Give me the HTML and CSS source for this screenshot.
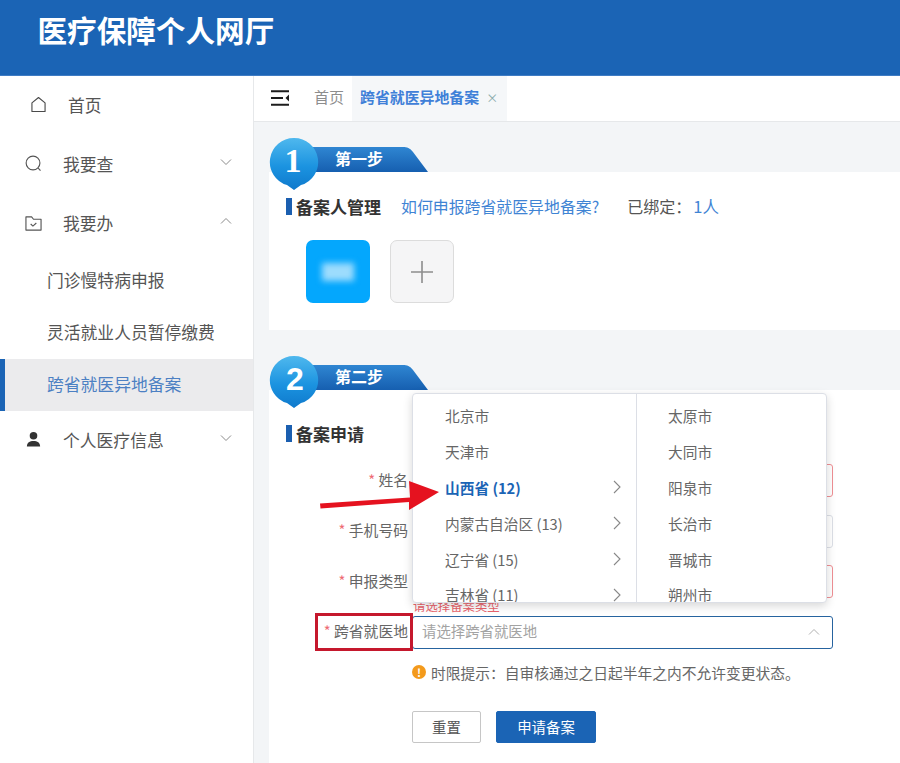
FILE: index.html
```html
<!DOCTYPE html>
<html lang="zh-CN">
<head>
<meta charset="utf-8">
<title>医疗保障个人网厅</title>
<link rel="stylesheet" href="styles.css">
</head>
<body>
<svg class="defs" width="0" height="0" aria-hidden="true">
  <defs>
    <symbol id="down" viewBox="0 0 12 8"><path d="M1 1.500l5 5 5-5" fill="none" stroke="currentColor" stroke-width="1"/></symbol>
    <symbol id="up" viewBox="0 0 12 8"><path d="M1 6.500l5-5 5 5" fill="none" stroke="currentColor" stroke-width="1"/></symbol>
    <symbol id="right" viewBox="0 0 8 14"><path d="M1 1l6 6-6 6" fill="none" stroke="currentColor" stroke-width="1.100"/></symbol>
    <linearGradient id="ball" x1="0" y1="0" x2="0" y2="1"><stop offset="0" stop-color="#4fb8ee"/><stop offset=".55" stop-color="#1b93e0"/><stop offset="1" stop-color="#0f79cc"/></linearGradient>
    <linearGradient id="band" x1="0" y1="0" x2="0" y2="1"><stop offset="0" stop-color="#2f86d2"/><stop offset="1" stop-color="#165fb0"/></linearGradient>
  </defs>
</svg>
<header class="topbar"><h1 class="brand">医疗保障个人网厅</h1></header>
<div class="shell">
  <nav class="sidebar">
    <a class="nav-item nav-home">
      <svg class="nav-icon home-icon" viewBox="0 0 16 17"><path d="M1 6.800L8 1l7 5.800V16H1z" fill="none" stroke="#4a4a4a" stroke-width="1.200" stroke-linejoin="round"/></svg>
      <span>首页</span>
    </a>
    <a class="nav-item">
      <svg class="nav-icon" viewBox="0 0 18 18"><circle cx="8.500" cy="8.500" r="7.300" fill="none" stroke="#555" stroke-width="1.200"/><path d="M14 14l2.400 2.600" stroke="#555" stroke-width="1.200"/></svg>
      <span class="nav-label">我要查</span>
      <svg class="chev"><use href="#down"/></svg>
    </a>
    <a class="nav-item">
      <svg class="nav-icon" viewBox="0 0 18 16"><path d="M1 1h6l2 2.500h8V15H1z" fill="none" stroke="#555" stroke-width="1.200" stroke-linejoin="round"/><path d="M6 8.500l2.400 2.200L12 7.500" fill="none" stroke="#555" stroke-width="1.200"/></svg>
      <span class="nav-label">我要办</span>
      <svg class="chev"><use href="#up"/></svg>
    </a>
    <div class="subnav">
      <a class="sub-item">门诊慢特病申报</a>
      <a class="sub-item">灵活就业人员暂停缴费</a>
      <a class="sub-item sub-active">跨省就医异地备案</a>
    </div>
    <a class="nav-item">
      <svg class="nav-icon" viewBox="0 0 18 18"><circle cx="9" cy="5" r="4" fill="#333"/><path d="M2 16.500c0-4.500 3-6 7-6s7 1.500 7 6z" fill="#333"/></svg>
      <span class="nav-label">个人医疗信息</span>
      <svg class="chev"><use href="#down"/></svg>
    </a>
  </nav>
  <main class="main">
    <div class="tabs">
      <svg class="tabs-toggle" viewBox="0 0 18 16"><path d="M0 1.200h18M0 8h12M0 14.800h18" stroke="#1d1d1d" stroke-width="2"/><path d="M18 4.500L14.500 8l3.500 3.500z" fill="#1d1d1d"/></svg>
      <span class="tab">首页</span>
      <span class="tab tab-active">跨省就医异地备案<i class="tab-close">×</i></span>
    </div>
    <div class="content">
      <section class="step step-one">
        <div class="ribbon">
          <svg class="ribbon-art" viewBox="0 0 160 54" width="160" height="54">
            <path d="M24 11h110c4 0 7 1 10 5l15 20H24z" fill="url(#band)"/>
            <path d="M25 2a24 24 0 0 1 7 47l-7 5-7-5A24 24 0 0 1 25 2z" fill="url(#ball)"/>
            <text class="ribbon-num" x="24" y="36" text-anchor="middle">1</text>
            <text class="ribbon-text" x="66" y="29">第一步</text>
          </svg>
        </div>
        <div class="card card-one">
          <div class="card-head">
            <h2 class="card-title">备案人管理</h2>
            <a class="help-link">如何申报跨省就医异地备案?</a>
            <span class="bound">已绑定：<em>1人</em></span>
          </div>
          <div class="people">
            <div class="person"><span class="blur-name"></span></div>
            <div class="add-person"><svg viewBox="0 0 22 22" width="22" height="22"><path d="M11 0v22M0 11h22" stroke="#8d8d8d" stroke-width="1.600"/></svg></div>
          </div>
        </div>
      </section>
      <section class="step step-two">
        <div class="ribbon">
          <svg class="ribbon-art" viewBox="0 0 160 54" width="160" height="54">
            <path d="M24 11h110c4 0 7 1 10 5l15 20H24z" fill="url(#band)"/>
            <path d="M25 2a24 24 0 0 1 7 47l-7 5-7-5A24 24 0 0 1 25 2z" fill="url(#ball)"/>
            <text class="ribbon-num ribbon-num2" x="26" y="36" text-anchor="middle">2</text>
            <text class="ribbon-text" x="66" y="29">第二步</text>
          </svg>
        </div>
        <div class="card card-two">
          <h2 class="card-title">备案申请</h2>
          <form class="form">
            <div class="row"><label class="label"><b>*</b> 姓名</label><div class="field field-error"></div></div>
            <div class="row"><label class="label"><b>*</b> 手机号码</label><div class="field"></div></div>
            <div class="row"><label class="label"><b>*</b> 申报类型</label><div class="field field-error"><span class="error-text">请选择备案类型</span></div></div>
            <div class="row"><label class="label"><b>*</b> 跨省就医地</label><div class="field field-focus"><span class="placeholder">请选择跨省就医地</span><svg class="field-chev"><use href="#up"/></svg></div></div>
            <div class="hint"><span class="hint-icon">!</span>时限提示：自审核通过之日起半年之内不允许变更状态。</div>
            <div class="actions">
              <button type="button" class="btn">重置</button>
              <button type="button" class="btn btn-primary">申请备案</button>
            </div>
            <div class="cascader">
              <ul class="col col-left">
                <li>北京市</li>
                <li>天津市</li>
                <li class="picked">山西省 (12)<svg class="arrow-r"><use href="#right"/></svg></li>
                <li>内蒙古自治区 (13)<svg class="arrow-r"><use href="#right"/></svg></li>
                <li>辽宁省 (15)<svg class="arrow-r"><use href="#right"/></svg></li>
                <li>吉林省 (11)<svg class="arrow-r"><use href="#right"/></svg></li>
              </ul>
              <ul class="col col-right">
                <li>太原市</li><li>大同市</li><li>阳泉市</li><li>长治市</li><li>晋城市</li><li>朔州市</li>
              </ul>
            </div>
            <svg class="callout-arrow" viewBox="0 0 120 30" width="120" height="30"><path d="M0 22.500L90 16.500 89 0l30 11-30 18 0-8L.5 27.500z" fill="#e5121f"/></svg>
            <span class="callout-box"></span>
          </form>
        </div>
      </section>
    </div>
  </main>
</div>
</body>
</html>
```
FILE: styles.css
```css
* { box-sizing: border-box; }
html, body { margin: 0; height: 763px; overflow: hidden; }
body { font-family: "Noto Sans CJK SC", "Liberation Sans", sans-serif; color: #555; background: #fff; }
ul { list-style: none; margin: 0; padding: 0; }
em, i { font-style: normal; }
.defs { position: absolute; }

.topbar { height: 76px; background: #1b64b5; border-bottom: 1px solid #3f7cc4; padding: 8px 0 0 37.500px; }
.brand { margin: 0; font-size: 29.600px; line-height: 44px; font-weight: 700; color: #fff; }

.shell { display: flex; height: 687px; }
.sidebar { width: 254px; flex: none; background: #fff; border-right: 1px solid #e6e8ea; }
.nav-item { display: flex; align-items: center; height: 59.300px; padding: 0 0 2px 25px; font-size: 16.800px; color: #555; }
.nav-icon { width: 17px; height: 17px; margin-right: 21px; flex: none; }
.home-icon { width: 15px; height: 17px; margin: 0 22px 0 6px; }
.nav-home { color: #555; }
.nav-label { flex: 1; }
.chev { width: 12px; height: 8px; margin-right: 21px; color: #8b8b8b; position: relative; top: -2px; }
.subnav { padding-top: 1px; }
.sub-item { display: flex; align-items: center; height: 52px; padding: 0 0 2px 47px; font-size: 16.800px; color: #555; }
.sub-active { background: #ebebed; color: #4c80c3; border-left: 5px solid #1b64b5; padding-left: 42px; }

.main { flex: 1; min-width: 0; background: #f3f5f7; }
.tabs { display: flex; align-items: stretch; height: 46px; background: #fff; border-bottom: 1px solid #e6e8ea; padding-left: 17px; font-size: 15px; line-height: 42px; }
.tabs-toggle { width: 18px; height: 16px; margin: 14px 25px 0 0; }
.tab { padding: 0 8px 0 0; color: #8d8d8d; }
.tab-active { background: #f5f7f9; color: #3f80d8; font-weight: 700; font-size: 14.900px; padding: 0 9px 0 8px; }
.tab-close { font-weight: 400; font-size: 12px; color: #8aa; margin-left: 7px; }

.content { padding-left: 15px; }
.step { display: flex; flex-direction: column; }
.ribbon { position: relative; }
.step-one .ribbon { height: 50px; }
.step-two .ribbon { height: 60px; }
.ribbon-art { position: absolute; left: 0; bottom: -18px; z-index: 2; }
.ribbon-num { font-family: "Liberation Serif", serif; font-weight: 700; font-size: 34px; fill: #fff; }
.ribbon-num2 { font-family: "Liberation Sans", sans-serif; font-size: 32px; }
.ribbon-text { font-size: 16px; font-weight: 700; fill: #fff; }

.card { background: #fff; padding-left: 17px; }
.card-one { height: 158px; padding-top: 24px; }
.card-two { height: 373px; padding-top: 33px; }
.card-head { display: flex; align-items: center; height: 20px; }
.card-title { display: flex; align-items: center; margin: 0; height: 20px; font-size: 17px; font-weight: 700; color: #333; }
.card-title::before { content: ""; width: 6px; height: 17px; margin-right: 4px; background: #1b5fb0; }
.help-link { margin-left: 20px; font-size: 15.900px; color: #3f84d4; }
.bound { margin-left: 28px; font-size: 16px; color: #555; }
.bound em { margin-left: 2px; font-size: 16.500px; color: #3f84d4; }
.people { display: flex; gap: 20px; margin: 24px 0 0 20px; }
.person { display: flex; align-items: center; justify-content: center; width: 64px; height: 63px; border-radius: 7px; background: #04a7fd; }
.blur-name { width: 32px; height: 18px; background: #9ddcfd; filter: blur(3px); }
.add-person { display: flex; align-items: center; justify-content: center; width: 64px; height: 63px; border: 1px solid #dcdcdc; border-radius: 7px; background: #f5f5f6; }

.form { position: relative; width: 564px; margin-top: 21px; display: flex; flex-direction: column; gap: 17.500px; }
.row { display: flex; align-items: center; gap: 4px; margin-left: -17px; }
.label { width: 139px; padding-bottom: 3px; text-align: right; font-size: 14.800px; color: #666; }
.label b { font-weight: 400; color: #ee6a73; }
.field { position: relative; display: flex; align-items: center; justify-content: space-between; width: 421px; height: 33px; border: 1px solid #dcdfe6; border-radius: 3px; background: #fff; padding: 0 12px 0 9px; }
.field-error { border-color: #ef8f94; }
.field-focus { border-color: #26639f; }
.error-text { position: absolute; left: 0; top: 33px; font-size: 12.400px; line-height: 15px; color: #e9636b; white-space: nowrap; }
.placeholder { padding-bottom: 3px; font-size: 14.400px; color: #a3a3a3; }
.field-chev { width: 12px; height: 8px; color: #b0b0b0; }
.hint { display: flex; align-items: center; margin: -3px 0 0 126px; height: 18px; font-size: 14.750px; color: #666; }
.hint-icon { display: flex; align-items: center; justify-content: center; width: 14px; height: 14px; margin-right: 5px; border-radius: 50%; background: #f39a1c; color: #fff; font-size: 11px; font-weight: 700; }
.actions { display: flex; gap: 15px; margin: 12px 0 0 126px; }
.btn { width: 69px; height: 32px; border: 1px solid #c6c6c6; border-radius: 2px; background: #fff; font: inherit; font-size: 14.400px; color: #555; padding: 0; }
.btn-primary { width: 100px; background: #1b64b5; border-color: #1b64b5; color: #fff; }

.cascader { position: absolute; left: 126px; top: -71px; display: flex; width: 415px; height: 210px; overflow: hidden; background: #fff; border: 1px solid #dcdfe6; border-radius: 4px; box-shadow: 0 3px 10px rgba(0,0,0,.16); z-index: 3; }
.col { flex: none; padding-top: 5px; font-size: 14.700px; color: #666; }
.col li { display: flex; align-items: center; height: 35.800px; padding-bottom: 2px; white-space: nowrap; }
.col-left { width: 224px; padding-left: 32px; border-right: 1px solid #dcdfe6; position: relative; }
.col-right { flex: 1; padding-left: 31px; }
.picked { font-weight: 700; color: #1b64b5; }
.arrow-r { position: absolute; left: 200px; width: 8px; height: 14px; color: #888; }
.callout-arrow { position: absolute; left: 34px; top: 17px; z-index: 4; }
.callout-box { position: absolute; left: 29px; top: 149px; width: 98px; height: 38px; border: 3px solid #c5182d; z-index: 4; }
```
